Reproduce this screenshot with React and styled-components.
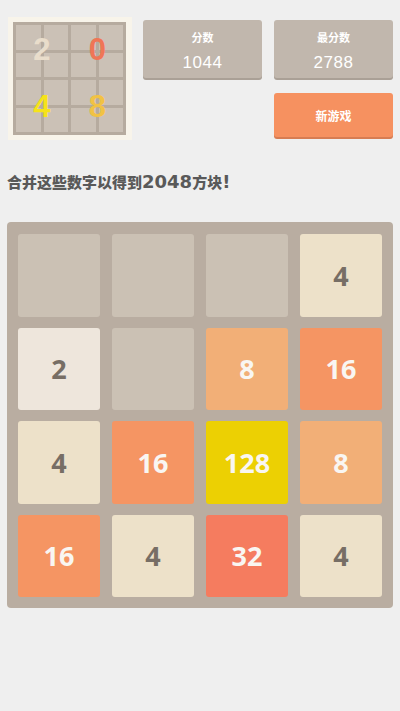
import React from 'react';
import styled, { createGlobalStyle } from 'styled-components';

const GlobalStyle = createGlobalStyle`
  html, body {
    margin: 0;
    padding: 0;
    background: #efefef;
    font-family: "Liberation Sans", "Noto Sans CJK SC", sans-serif;
  }
`;

const Page = styled.div`
  width: 400px;
  min-height: 711px;
  box-sizing: border-box;
  padding: 17px 7px 0 7px;
  background: #efefef;
`;

// 상단: 로고 + 점수
const Header = styled.div`
  display: flex;
  align-items: flex-start;
`;

const Logo = styled.div`
  position: relative;
  width: 125px;
  height: 123px;
  margin-left: 1px;
  box-sizing: border-box;
  padding: 5px 6px 5px 5px;
  background: #f8f4ea;
`;

const LogoGrid = styled.div`
  display: grid;
  grid-template-columns: repeat(4, 1fr);
  grid-template-rows: repeat(4, 1fr);
  gap: 3px;
  padding: 3px;
  height: 100%;
  box-sizing: border-box;
  background: #b6ab9f;
`;

const LogoCell = styled.div`
  background: #cbc1b6;
`;

const LogoDigits = styled.div`
  position: absolute;
  left: 5px;
  top: 5px;
  right: 6px;
  bottom: 5px;
  display: grid;
  grid-template-columns: 1fr 1fr;
  grid-template-rows: 1fr 1fr;
  padding: 0 1px;
`;

const LogoDigit = styled.div`
  display: flex;
  align-items: center;
  justify-content: center;
  font-size: 31px;
  font-weight: bold;
  color: ${p => p.$color};
`;

const Scores = styled.div`
  margin-left: 11px;
  margin-top: 3px;
  display: grid;
  grid-template-columns: 119px 119px;
  column-gap: 12px;
  row-gap: 15px;
`;

const ScoreBox = styled.div`
  height: 58px;
  border-radius: 3px;
  background: #c1b7ad;
  box-shadow: 0 2px 0 #aaa096;
  color: #fff;
  display: flex;
  flex-direction: column;
  align-items: center;
`;

const ScoreLabel = styled.div`
  margin-top: 11px;
  font-size: 11px;
  font-weight: bold;
  line-height: 14px;
`;

const ScoreValue = styled.div`
  margin-top: 8px;
  font-size: 17px;
  line-height: 20px;
  letter-spacing: 0.5px;
`;

const NewGame = styled.button`
  grid-column: 2;
  height: 44px;
  border: none;
  border-radius: 3px;
  background: #f69160;
  box-shadow: 0 2px 0 #d77c52;
  color: #fff;
  font-family: inherit;
  font-size: 12px;
  font-weight: bold;
  padding: 0;
`;

const Title = styled.div`
  margin-top: 32px;
  font-family: "Noto Sans CJK SC", sans-serif;
  font-size: 15px;
  line-height: 20px;
  font-weight: 900;
  color: #595959;
`;

const TitleNum = styled.span`
  font-family: "DejaVu Sans", sans-serif;
  font-size: 18px;
  font-weight: bold;
`;

// 보드
const Board = styled.div`
  margin-top: 30px;
  width: 386px;
  height: 386px;
  box-sizing: border-box;
  padding: 12px 11px 11px 11px;
  border-radius: 4px;
  background: #b9ada1;
  display: grid;
  grid-template-columns: repeat(4, 1fr);
  grid-template-rows: repeat(4, 1fr);
  gap: 11px 12px;
`;

const tileColors = {
  0: ['#cbc1b4', '#776e65'],
  2: ['#eee6dc', '#776e65'],
  4: ['#ede1c9', '#776e65'],
  8: ['#f2af77', '#f9f6f2'],
  16: ['#f59563', '#f9f6f2'],
  32: ['#f57c5f', '#f9f6f2'],
  128: ['#ecd003', '#f9f6f2'],
};

const Tile = styled.div`
  border-radius: 3px;
  background: ${p => tileColors[p.$value][0]};
  color: ${p => tileColors[p.$value][1]};
  display: flex;
  align-items: center;
  justify-content: center;
  font-family: "Open Sans", "Liberation Sans", sans-serif;
  font-size: 27px;
  font-weight: bold;
`;

const board = [
  [0, 0, 0, 4],
  [2, 0, 8, 16],
  [4, 16, 128, 8],
  [16, 4, 32, 4],
];

const App = () => {
  return (
    <Page>
      <GlobalStyle />
      <Header>
        <Logo>
          <LogoGrid>
            {Array.from({ length: 16 }).map((_, i) => <LogoCell key={i} />)}
          </LogoGrid>
          <LogoDigits>
            <LogoDigit $color="#e9ddcb">2</LogoDigit>
            <LogoDigit $color="#ef7656">0</LogoDigit>
            <LogoDigit $color="#f6e31a">4</LogoDigit>
            <LogoDigit $color="#f1c244">8</LogoDigit>
          </LogoDigits>
        </Logo>
        <Scores>
          <ScoreBox>
            <ScoreLabel>分数</ScoreLabel>
            <ScoreValue>1044</ScoreValue>
          </ScoreBox>
          <ScoreBox>
            <ScoreLabel>最分数</ScoreLabel>
            <ScoreValue>2788</ScoreValue>
          </ScoreBox>
          <NewGame>新游戏</NewGame>
        </Scores>
      </Header>

      <Title>合并这些数字以得到<TitleNum>2048</TitleNum>方块<TitleNum>!</TitleNum></Title>

      <Board>
        {board.flat().map((v, i) => (
          <Tile key={i} $value={v}>{v ? v : ''}</Tile>
        ))}
      </Board>
    </Page>
  );
};

export default App;
